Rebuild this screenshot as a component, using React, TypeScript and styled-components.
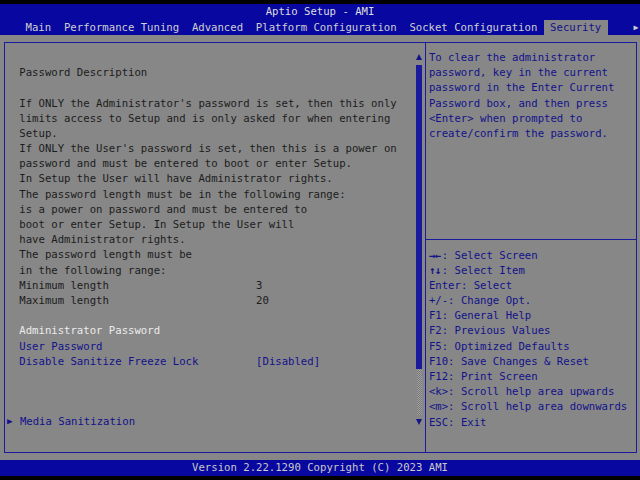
import React from "react";
import styled, {createGlobalStyle} from "styled-components";

// the setup screen is a 100 x 31 character grid, scaled to 640x480
const COL = 6.4
const ROW = 15.2

const BAR_BLUE = "#0808a0"
const PANEL_GRAY = "#878787"
const LINE_BLUE = "#1a1a9c"
const NAVY = "#12128a"
const DARK = "#1c1c1c"
const WHITE = "#ececec"

const GlobalStyle = createGlobalStyle`
  html, body {
    margin: 0;
    padding: 0;
    background: #000;
  }
  body {
    font-family: "DejaVu Sans Mono", "Liberation Mono", monospace;
    font-size: 10.63px;
  }
`

type Tone = "dark" | "navy" | "white"

const toneColor = (tone: Tone) => tone === "white" ? WHITE : tone === "navy" ? NAVY : DARK

const tabs = ["Main", "Performance Tuning", "Advanced", "Platform Configuration", "Socket Configuration", "Security"]

const description = [
    "If ONLY the Administrator's password is set, then this only",
    "limits access to Setup and is only asked for when entering",
    "Setup.",
    "If ONLY the User's password is set, then this is a power on",
    "password and must be entered to boot or enter Setup.",
    "In Setup the User will have Administrator rights.",
    "The password length must be in the following range:",
    "is a power on password and must be entered to",
    "boot or enter Setup. In Setup the User will",
    "have Administrator rights.",
    "The password length must be",
    "in the following range:",
]

const helpText = [
    "To clear the administrator",
    "password, key in the current",
    "password in the Enter Current",
    "Password box, and then press",
    "<Enter> when prompted to",
    "create/confirm the password.",
]

const keys: { key: string, label: string, arrows?: boolean }[] = [
    {key: "→←", label: ": Select Screen", arrows: true},
    {key: "↑↓", label: ": Select Item", arrows: true},
    {key: "Enter", label: ": Select"},
    {key: "+/-", label: ": Change Opt."},
    {key: "F1", label: ": General Help"},
    {key: "F2", label: ": Previous Values"},
    {key: "F5", label: ": Optimized Defaults"},
    {key: "F10", label: ": Save Changes & Reset"},
    {key: "F12", label: ": Print Screen"},
    {key: "<k>", label: ": Scroll help area upwards"},
    {key: "<m>", label: ": Scroll help area downwards"},
    {key: "ESC", label: ": Exit"},
]

const App: React.FC = () => {
    return (
        <>
            <GlobalStyle/>
            <Screen>
                <Header>
                    <TitleRow>Aptio Setup - AMI</TitleRow>
                    <TabRow>
                        {tabs.map(t => <Tab key={t} active={t === "Security"}>{t}</Tab>)}
                        <TabArrow>▶</TabArrow>
                    </TabRow>
                </Header>

                <Body>
                    <Frame>
                        <LeftPanel>
                            <Blank rows={1}/>
                            <Line tone="dark">Password Description</Line>
                            <Blank rows={1}/>
                            {description.map((d, i) => <Line key={i} tone="dark">{d}</Line>)}
                            <Setting tone="dark"><span>Minimum length</span><span>3</span></Setting>
                            <Setting tone="dark"><span>Maximum length</span><span>20</span></Setting>
                            <Blank rows={1}/>
                            <Line tone="white">Administrator Password</Line>
                            <Line tone="navy">User Password</Line>
                            <Setting tone="navy"><span>Disable Sanitize Freeze Lock</span><span>[Disabled]</span></Setting>
                            <Blank rows={3}/>
                            <Submenu><Pointer>▶</Pointer>Media Sanitization</Submenu>
                        </LeftPanel>

                        <ScrollColumn>
                            <ScrollCell><ScrollArrow dir="up"/></ScrollCell>
                            <ScrollThumb/>
                            <ScrollTrack/>
                            <ScrollCell><ScrollArrow dir="down"/></ScrollCell>
                        </ScrollColumn>

                        <HelpPanel>
                            <HelpBlock>
                                {helpText.map((h, i) => <Line key={i} tone="navy">{h}</Line>)}
                            </HelpBlock>
                            <HelpSeparator/>
                            <KeyBlock>
                                {keys.map(k => (
                                    <Line key={k.key} tone="navy">
                                        {k.arrows ? <ArrowKey>{k.key}</ArrowKey> : k.key}{k.label}
                                    </Line>
                                ))}
                            </KeyBlock>
                        </HelpPanel>
                    </Frame>
                </Body>

                <Footer>Version 2.22.1290 Copyright (C) 2023 AMI</Footer>
            </Screen>
        </>
    );
}

export default App

const Screen = styled.div`
  width: 640px;
  height: 480px;
  padding-top: 4.4px;
  box-sizing: border-box;
  background: #000;
  display: flex;
  flex-direction: column;
  overflow: hidden;
`
const Header = styled.div`
  background: ${BAR_BLUE};
  display: flex;
  flex-direction: column;
`
const TitleRow = styled.div`
  height: ${ROW}px;
  line-height: ${ROW}px;
  text-align: center;
  color: #dedede;
  white-space: pre;
`
const TabRow = styled.div`
  height: ${ROW}px;
  line-height: ${ROW}px;
  display: flex;
  padding-left: ${COL * 3}px;
  white-space: pre;
`
const Tab = styled.div<{ active?: boolean }>`
  padding: 0 ${COL}px;
  color: ${p => p.active ? NAVY : "#cfcfcf"};
  background: ${p => p.active ? PANEL_GRAY : "transparent"};
`
const TabArrow = styled.div`
  margin-left: auto;
  width: ${COL}px;
  color: #cfcfcf;
  font-size: 8px;
`
const Body = styled.div`
  background: ${PANEL_GRAY};
  padding: 7px 3px 7px 4px;
  border-left: 1.5px solid #4a4a4a;
  margin-left: -1.5px;
`
const Frame = styled.div`
  border: 1px solid ${LINE_BLUE};
  display: flex;
  height: ${ROW * 26 + 14.4}px;
  box-sizing: content-box;
`
const LeftPanel = styled.div`
  width: 411px;
  padding: 7.2px 0 0 14.8px;
  box-sizing: border-box;
  display: flex;
  flex-direction: column;
`
const Line = styled.div<{ tone: Tone }>`
  height: ${ROW}px;
  line-height: ${ROW}px;
  white-space: pre;
  color: ${p => toneColor(p.tone)};
`
const ArrowKey = styled.span`
  font-weight: bold;
  letter-spacing: -0.5px;
  margin-right: 1px;
`
const Blank = styled.div<{ rows: number }>`
  height: ${p => p.rows * ROW}px;
  flex-shrink: 0;
`
const Setting = styled.div<{ tone: Tone }>`
  display: grid;
  grid-template-columns: ${COL * 37}px auto;
  height: ${ROW}px;
  line-height: ${ROW}px;
  white-space: pre;
  color: ${p => toneColor(p.tone)};
`
const Submenu = styled.div`
  display: flex;
  height: ${ROW}px;
  line-height: ${ROW}px;
  color: ${NAVY};
`
const Pointer = styled.span`
  width: ${COL * 2}px;
  margin-left: -${COL * 2 - 0.6}px;
  font-size: 9px;
`
const ScrollColumn = styled.div`
  width: 9px;
  padding-top: 7.2px;
  display: flex;
  flex-direction: column;
`
const ScrollCell = styled.div`
  width: ${COL}px;
  height: ${ROW}px;
  display: flex;
  align-items: center;
  justify-content: center;
`
const ScrollArrow = styled.div<{ dir: "up" | "down" }>`
  width: 0;
  height: 0;
  border-left: 3px solid transparent;
  border-right: 3px solid transparent;
  ${p => p.dir === "up"
          ? `border-bottom: 6px solid ${NAVY}; margin-top: -2px;`
          : `border-top: 6px solid ${NAVY};`}
`
const ScrollThumb = styled.div`
  width: 6px;
  margin-left: 0.5px;
  height: ${ROW * 20}px;
  background: ${LINE_BLUE};
`
const ScrollTrack = styled.div`
  width: 5px;
  margin-left: 1px;
  height: ${ROW * 3}px;
  background: repeating-conic-gradient(#a2a2a2 0 25%, #767676 0 50%) 0 0 / 2px 2px;
`
const HelpPanel = styled.div`
  flex: 1;
  border-left: 1px solid ${LINE_BLUE};
  padding-top: 7.2px;
  display: flex;
  flex-direction: column;
`
const HelpBlock = styled.div`
  height: ${ROW * 12}px;
  padding-left: 3.4px;
`
const HelpSeparator = styled.div`
  height: ${ROW}px;
  display: flex;
  align-items: center;

  &::after {
    content: "";
    flex: 1;
    border-top: 1px solid ${LINE_BLUE};
  }
`
const KeyBlock = styled.div`
  padding-left: 3.4px;
`
const Footer = styled.div`
  height: ${ROW}px;
  line-height: ${ROW}px;
  background: ${BAR_BLUE};
  color: #c8c8c8;
  text-align: center;
  white-space: pre;
`
